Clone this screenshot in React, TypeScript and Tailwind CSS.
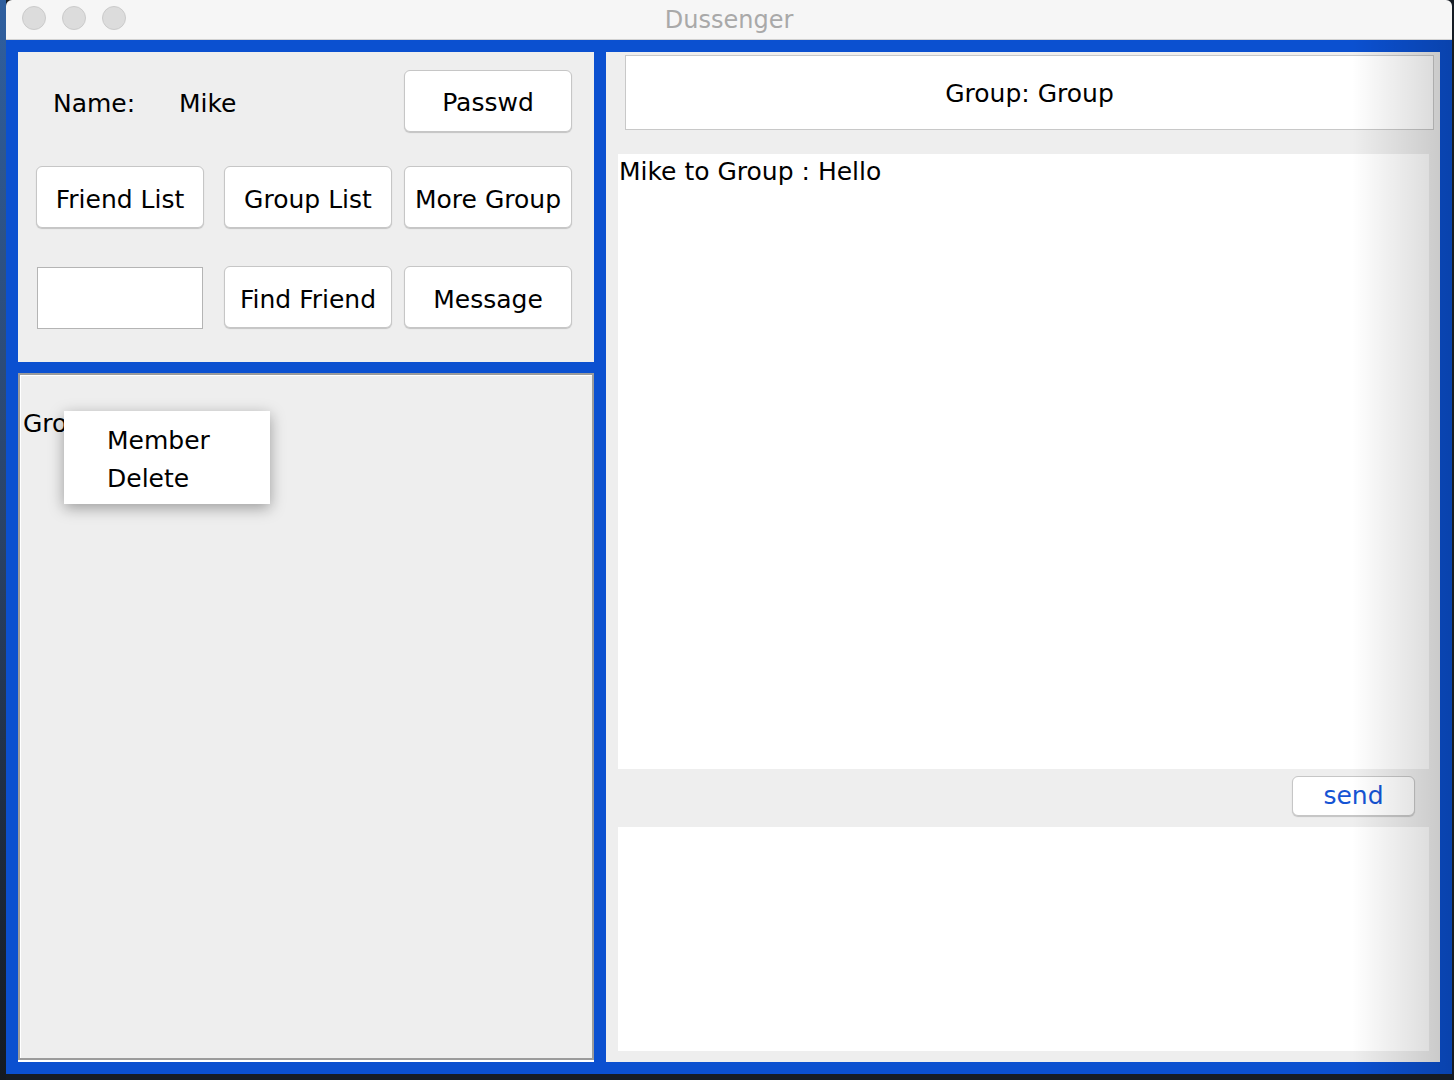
import React from "react";

const font = { fontFamily: '"DejaVu Sans", "Liberation Sans", sans-serif' };

function Btn({ children, className = "" }: { children: React.ReactNode; className?: string }) {
  return (
    <div
      className={
        "flex items-center justify-center rounded-[6px] border border-[#c6c6c6] bg-white text-[25px] text-black shadow-[0_1px_1px_rgba(0,0,0,0.18)] " +
        className
      }
    >
      {children}
    </div>
  );
}

export default function App() {
  return (
    <div className="relative w-[1454px] h-[1080px] overflow-hidden bg-[#161c24]" style={font}>
      {/* desktop left strip */}
      <div className="absolute left-0 top-0 w-[6px] h-[1080px] bg-gradient-to-b from-[#2f5f9f] via-[#2a4266] to-[#141a22]" />
      <div className="flex">
        <div className="w-[6px] shrink-0" />
        <div className="relative w-[1446px] flex flex-col">
          {/* title bar */}
          <div className="relative h-[40px] bg-[#f6f6f6] border-b border-[#d2d2d2] rounded-t-[6px] flex items-center justify-center">
            <div className="absolute left-[16px] top-[6px] flex gap-[16px]">
              <div className="w-[24px] h-[24px] rounded-full bg-[#dcdcdc] border border-[#cbcbcb]" />
              <div className="w-[24px] h-[24px] rounded-full bg-[#dcdcdc] border border-[#cbcbcb]" />
              <div className="w-[24px] h-[24px] rounded-full bg-[#dcdcdc] border border-[#cbcbcb]" />
            </div>
            <span className="text-[24px] text-[#a9a9a9] leading-none">Dussenger</span>
          </div>
          {/* blue body */}
          <div className="h-[1034px] bg-[#0b50d0] p-[12px] flex gap-[12px]">
            {/* left column */}
            <div className="w-[576px] flex flex-col gap-[11px]">
              <div className="h-[310px] bg-[#eeeeee] flex flex-col pl-[18px] pt-[18px]">
                <div className="h-[62px] flex items-center">
                  <span className="w-[143px] pl-[17px] pt-[6px] text-[25px]">Name:</span>
                  <span className="w-[225px] pt-[6px] text-[25px]">Mike</span>
                  <Btn className="w-[168px] h-[62px] pt-[3px]">Passwd</Btn>
                </div>
                <div className="h-[62px] mt-[34px] flex">
                  <Btn className="w-[168px] h-[62px] pt-[5px]">Friend List</Btn>
                  <Btn className="w-[168px] h-[62px] pt-[5px] ml-[20px]">Group List</Btn>
                  <Btn className="w-[168px] h-[62px] pt-[5px] ml-[12px]">More Group</Btn>
                </div>
                <div className="h-[62px] mt-[38px] flex">
                  <div className="w-[166px] h-[62px] ml-[1px] mt-[1px] bg-white border border-[#b4b4b4]" />
                  <Btn className="w-[168px] h-[62px] pt-[5px] ml-[21px]">Find Friend</Btn>
                  <Btn className="w-[168px] h-[62px] pt-[5px] ml-[12px]">Message</Btn>
                </div>
              </div>
              <div className="relative flex-1 bg-white pb-[2px]">
                <div className="h-full border-2 border-[#9b9b9b] bg-[#eeeeee]">
                  <div className="h-full border-l border-t border-white pt-[33px] pl-[2px]">
                    <span className="text-[25px] leading-[30px]">Group</span>
                  </div>
                </div>
                <div className="absolute left-[46px] top-[38px] w-[206px] h-[93px] bg-white shadow-[0_4px_14px_rgba(0,0,0,0.35)] pl-[43px] pt-[11px]">
                  <div className="text-[25px] leading-[38px]">Member</div>
                  <div className="text-[25px] leading-[38px]">Delete</div>
                </div>
              </div>
            </div>
            {/* right column */}
            <div className="flex-1 bg-[#eeeeee] flex flex-col pt-[3px] pb-[11px]">
              <div className="ml-[19px] mr-[6px] h-[75px] pt-[2px] bg-white border border-[#c8c8c8] flex items-center justify-center text-[25px]">
                Group: Group
              </div>
              <div className="ml-[12px] mr-[11px] mt-[24px] flex-1 bg-white pl-[1px] pt-[3px]">
                <div className="text-[25px] leading-[30px]">Mike to Group : Hello</div>
              </div>
              <div className="h-[58px] flex justify-end items-start pt-[7px] pr-[25px]">
                <Btn className="w-[123px] h-[40px]">
                  <span className="text-[#1554d4]">send</span>
                </Btn>
              </div>
              <div className="ml-[12px] mr-[11px] h-[224px] bg-white" />
            </div>
          </div>
          {/* right shading overlay */}
          <div className="pointer-events-none absolute right-0 top-[40px] w-[100px] h-[1034px] bg-gradient-to-r from-transparent to-[rgba(0,0,0,0.17)]" />
        </div>
      </div>
    </div>
  );
}
